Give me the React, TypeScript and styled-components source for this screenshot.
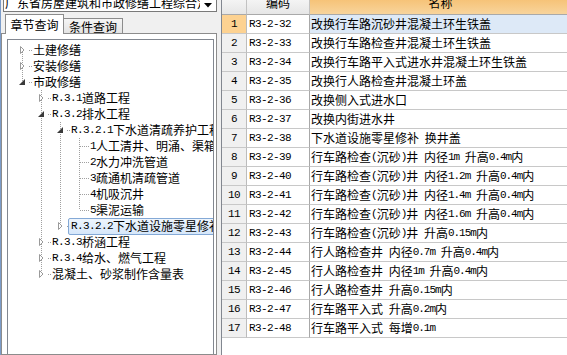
import React from 'react';
import styled, { createGlobalStyle } from 'styled-components';

const GlobalStyle = createGlobalStyle`
  * { box-sizing: border-box; }
  html, body { margin: 0; padding: 0; background: #f0f0f0; overflow: hidden; }
  body {
    font-family: "Noto Sans CJK SC", sans-serif;
    font-size: 12px;
    color: #000;
  }
`;

const Screen = styled.div`
  display: flex;
  width: 567px;
  height: 355px;
  overflow: hidden;
  background: #f0f0f0;
`;

const LeftPanel = styled.div`
  width: 217px;
  flex: none;
  display: flex;
  flex-direction: column;
  border-left: 1px solid #7c9cc9;
`;

const ComboBox = styled.div`
  height: 12px;
  margin-left: 2px;
  display: flex;
  background: #fff;
  border: 1px solid #7a7a7a;
  border-top: none;
  overflow: hidden;
`;

const ComboText = styled.div`
  flex: 1;
  white-space: nowrap;
  overflow: hidden;
  line-height: 14px;
  margin-top: -4px;
  padding-left: 1px;
`;

const ComboButton = styled.div`
  width: 16px;
  flex: none;
  display: flex;
  justify-content: center;
  padding-top: 3px;
`;

const TabBar = styled.div`
  display: flex;
  align-items: flex-end;
  height: 20px;
  margin-top: 2px;
  margin-bottom: -1px;
  padding-left: 4px;
  position: relative;
  z-index: 1;
`;

const Tab = styled.div<{ $active?: boolean }>`
  height: ${({ $active }) => ($active ? 20 : 16)}px;
  width: ${({ $active }) => ($active ? 59 : 60)}px;
  margin-left: ${({ $active }) => ($active ? 0 : -1)}px;
  border: 1px solid #8c8c8c;
  border-bottom: ${({ $active }) => ($active ? 'none' : '1px solid #8c8c8c')};
  background: ${({ $active }) => ($active ? '#fff' : 'linear-gradient(#f5f5f5, #e3e3e3)')};
  display: flex;
  justify-content: center;
  align-items: center;
  padding-top: ${({ $active }) => ($active ? 0 : 1)}px;
  line-height: 14px;
  z-index: ${({ $active }) => ($active ? 2 : 1)};
`;

const TabPanel = styled.div`
  flex: 1;
  min-height: 0;
  display: flex;
  flex-direction: column;
  background: #fff;
  border: 1px solid #8c8c8c;
  padding: 5px 2px 0 5px;
`;

const TreeBox = styled.div`
  flex: 1;
  border: 1px solid #828790;
  border-bottom: none;
  background: #fff;
  padding-top: 2px;
  overflow: hidden;
`;

const TreeRow = styled.div`
  display: flex;
  align-items: center;
  height: 16px;
  padding-left: 5px;
  white-space: nowrap;
`;

const TreeLabel = styled.span<{ $selected?: boolean }>`
  display: inline-flex;
  align-items: center;
  height: ${({ $selected }) => ($selected ? 17 : 16)}px;
  margin-left: -2px;
  padding: 0 2px;
  border: 1px solid ${({ $selected }) => ($selected ? '#84a9d6' : 'transparent')};
  border-radius: 2px;
  background: ${({ $selected }) => ($selected ? 'linear-gradient(#eef5fd, #d6e7fa)' : 'transparent')};
  line-height: 14px;
`;

const Latin = styled.span<{ $narrow?: boolean }>`
  font-family: "Liberation Mono", monospace;
  font-size: 11px;
  letter-spacing: ${({ $narrow }) => ($narrow ? -1 : -0.6)}px;
  white-space: pre;
`;

const Grid = styled.div`
  margin-left: 4px;
  flex: none;
  width: 351px;
  background: #fff;
  border-left: 1px solid #828790;
  display: grid;
  grid-template-columns: 25px 63px 262px;
  grid-template-rows: 15px;
  grid-auto-rows: 19px;
  align-content: start;
`;

const HeaderCell = styled.div<{ $accent?: boolean }>`
  height: 15px;
  overflow: hidden;
  display: flex;
  justify-content: center;
  align-items: flex-start;
  background: ${({ $accent }) =>
    $accent ? 'linear-gradient(#f6c378, #f8d49c)' : 'linear-gradient(#f4f4f4, #e6e6e6)'};
  border-right: 1px solid #c2c2c2;
  border-bottom: 1px solid #a9a9a9;
  line-height: 14px;

  span {
    margin-top: -4px;
  }
`;

const Cell = styled.div`
  display: flex;
  align-items: center;
  white-space: nowrap;
  overflow: hidden;
  border-bottom: 1px solid #c8c8c8;
  line-height: 14px;
`;

const RowNumCell = styled(Cell)<{ $selected?: boolean }>`
  justify-content: center;
  background: ${({ $selected }) => ($selected ? '#fdd291' : '#f0f0f0')};
  border-right: 1px solid #bcbcbc;
`;

const CodeCell = styled(Cell)`
  padding-left: 2px;
  border-right: 1px solid #a8a8a8;
`;

const NameCell = styled(Cell)<{ $selected?: boolean }>`
  padding-left: 1px;
  background: ${({ $selected }) => ($selected ? '#dde9f7' : '#fff')};
`;

const mixed = (text: string, narrow?: boolean) =>
  text.split(/([\x20-\x7e]+)/).map((part, i) =>
    i % 2 ? (
      <Latin key={i} $narrow={narrow}>
        {part}
      </Latin>
    ) : (
      part
    )
  );

type TreeNode = { level: number; text: string; state?: 'open' | 'closed'; selected?: boolean };

const treeRows: TreeNode[] = [
  { level: 0, text: '土建修缮', state: 'closed' },
  { level: 0, text: '安装修缮', state: 'closed' },
  { level: 0, text: '市政修缮', state: 'open' },
  { level: 1, text: 'R.3.1道路工程', state: 'closed' },
  { level: 1, text: 'R.3.2排水工程', state: 'open' },
  { level: 2, text: 'R.3.2.1下水道清疏养护工程', state: 'open' },
  { level: 3, text: '1人工清井、明涌、渠箱清疏' },
  { level: 3, text: '2水力冲洗管道' },
  { level: 3, text: '3疏通机清疏管道' },
  { level: 3, text: '4机吸沉井' },
  { level: 3, text: '5渠泥运输' },
  { level: 2, text: 'R.3.2.2下水道设施零星修补', state: 'closed', selected: true },
  { level: 1, text: 'R.3.3桥涵工程', state: 'closed' },
  { level: 1, text: 'R.3.4给水、燃气工程', state: 'closed' },
  { level: 1, text: '混凝土、砂浆制作含量表', state: 'closed' },
];

const hasLaterSibling = (i: number, level: number) => {
  for (let j = i + 1; j < treeRows.length; j++) {
    if (treeRows[j].level < level) return false;
    if (treeRows[j].level === level) return true;
  }
  return false;
};

const DOT = { stroke: '#a0a0a0', strokeWidth: 1, strokeDasharray: '1 1' };

type GlyphProps = { up?: boolean; down?: boolean; own?: boolean; state?: 'open' | 'closed' };

const TreeGlyph = ({ up, down, own, state }: GlyphProps) => (
  <svg width="19" height="16" viewBox="0 0 19 16" style={{ flex: 'none' }}>
    {(up || down) && <line x1="9.5" y1={up ? 0 : 8} x2="9.5" y2={down ? 16 : 8} {...DOT} />}
    {own && <line x1={state ? 16 : 10} y1="8.5" x2="19" y2="8.5" {...DOT} />}
    {state === 'closed' && (
      <polygon points="7.5,4.5 7.5,11.5 11,8" fill="#fff" stroke="#9a9a9a" strokeWidth="1" />
    )}
    {state === 'open' && <polygon points="12,5 12,11 6,11" fill="#3a3a3a" />}
  </svg>
);

const gridRows: [string, string][] = [
  ['R3-2-32', '改换行车路沉砂井混凝土环生铁盖'],
  ['R3-2-33', '改换行车路检查井混凝土环生铁盖'],
  ['R3-2-34', '改换行车路平入式进水井混凝土环生铁盖'],
  ['R3-2-35', '改换行人路检查井混凝土环盖'],
  ['R3-2-36', '改换侧入式进水口'],
  ['R3-2-37', '改换内街进水井'],
  ['R3-2-38', '下水道设施零星修补 换井盖'],
  ['R3-2-39', '行车路检查(沉砂)井 内径1m 升高0.4m内'],
  ['R3-2-40', '行车路检查(沉砂)井 内径1.2m 升高0.4m内'],
  ['R3-2-41', '行车路检查(沉砂)井 内径1.4m 升高0.4m内'],
  ['R3-2-42', '行车路检查(沉砂)井 内径1.6m 升高0.4m内'],
  ['R3-2-43', '行车路检查(沉砂)井 升高0.15m内'],
  ['R3-2-44', '行人路检查井 内径0.7m 升高0.4m内'],
  ['R3-2-45', '行人路检查井 内径1m 升高0.4m内'],
  ['R3-2-46', '行人路检查井 升高0.15m内'],
  ['R3-2-47', '行车路平入式 升高0.2m内'],
  ['R3-2-48', '行车路平入式 每增0.1m'],
];

const App: React.FC = () => (
  <Screen>
    <GlobalStyle />
    <LeftPanel>
      <ComboBox>
        <ComboText>广东省房屋建筑和市政修缮工程综合定额</ComboText>
        <ComboButton>
          <svg width="8" height="5" viewBox="0 0 8 5">
            <polygon points="0,0 8,0 4,4.5" fill="#000" />
          </svg>
        </ComboButton>
      </ComboBox>
      <TabBar>
        <Tab $active>章节查询</Tab>
        <Tab>条件查询</Tab>
      </TabBar>
      <TabPanel>
        <TreeBox>
          {treeRows.map((node, i) => (
            <TreeRow key={i}>
              {Array.from({ length: node.level }, (_, k) => (
                <TreeGlyph key={k} up={hasLaterSibling(i, k)} down={hasLaterSibling(i, k)} />
              ))}
              <TreeGlyph up={i > 0} down={hasLaterSibling(i, node.level)} own state={node.state} />
              <TreeLabel $selected={node.selected}>{mixed(node.text)}</TreeLabel>
            </TreeRow>
          ))}
        </TreeBox>
      </TabPanel>
    </LeftPanel>
    <Grid>
      <HeaderCell />
      <HeaderCell>
        <span>编码</span>
      </HeaderCell>
      <HeaderCell $accent>
        <span>名称</span>
      </HeaderCell>
      {gridRows.map(([code, name], i) => (
        <React.Fragment key={code}>
          <RowNumCell $selected={i === 0}>
            <Latin>{i + 1}</Latin>
          </RowNumCell>
          <CodeCell>
            <Latin>{code}</Latin>
          </CodeCell>
          <NameCell $selected={i === 0}>{mixed(name, true)}</NameCell>
        </React.Fragment>
      ))}
    </Grid>
  </Screen>
);

export default App;
